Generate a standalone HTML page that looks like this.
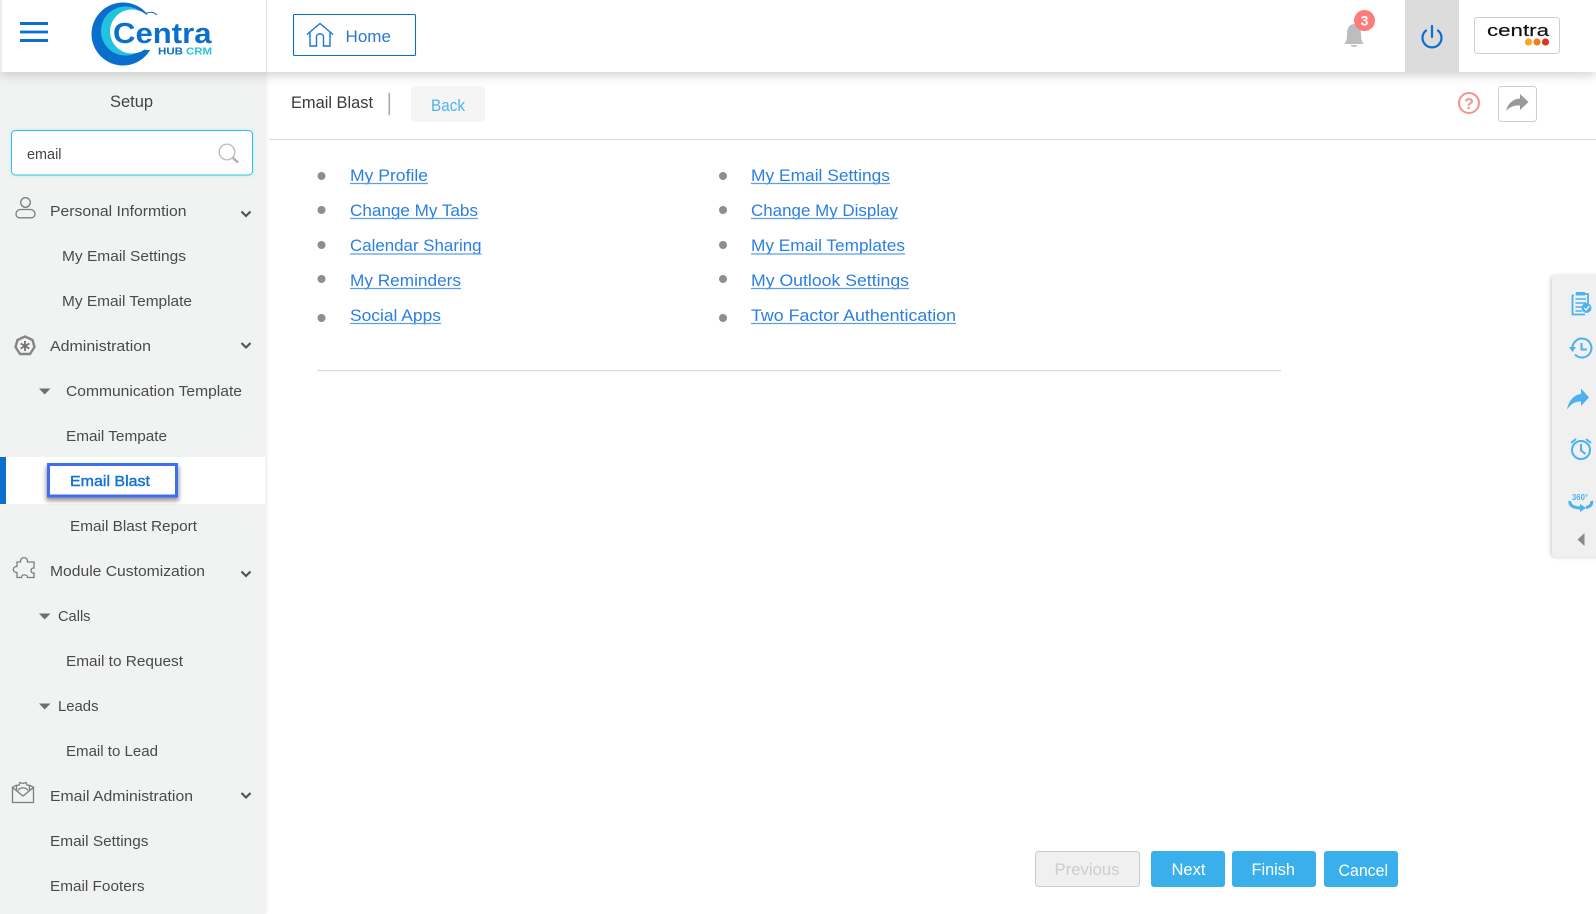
<!DOCTYPE html>
<html lang="en"><head><meta charset="utf-8"><title>Email Blast</title>
<style>
html,body{margin:0;padding:0;background:#fff;width:1596px;height:914px;overflow:hidden}
svg{display:block}
text{font-family:"Liberation Sans",sans-serif}
.s{font-size:15px;fill:#4a4a4a}
.l{font-size:17px;fill:#2b7fe0}
.ul{stroke:#5c9fe8;stroke-width:1.2}
.ic{fill:none;stroke:#7d7d7d;stroke-width:1.3}
.b{fill:none;stroke:#4db2ec;stroke-width:2}
</style></head><body>
<svg xmlns="http://www.w3.org/2000/svg" width="1596" height="914" viewBox="0 0 1596 914">
<defs>
<filter id="bl" x="-10%" y="-50%" width="120%" height="250%"><feGaussianBlur stdDeviation="6"/></filter>
<filter id="b2" x="-30%" y="-30%" width="160%" height="160%"><feGaussianBlur stdDeviation="2"/></filter>
<filter id="b3" x="-50%" y="-5%" width="200%" height="110%"><feGaussianBlur stdDeviation="2"/></filter>
</defs>
<rect width="1596" height="914" fill="#fff"/>
<!-- sidebar -->
<rect x="262" y="60" width="5" height="854" fill="#c8c8c8" opacity=".3" filter="url(#b2)"/>
<rect x="0" y="60" width="265" height="854" fill="#f1f3f3"/>
<!-- header -->
<rect x="0" y="62" width="1596" height="12" fill="#9a9a9a" opacity=".55" filter="url(#bl)"/>
<rect x="2" y="0" width="1594" height="72" fill="#fff"/>
<rect x="0" y="0" width="2" height="72" fill="#eceeee"/>
<rect x="266" y="0" width="1" height="72" fill="#e2e2e2"/>
<g fill="#0b6fce"><rect x="20" y="22" width="28" height="3"/><rect x="20" y="30.6" width="28" height="2.8"/><rect x="20" y="39" width="28" height="3"/></g>
<!-- logo -->
<circle cx="123" cy="34" r="31.5" fill="#0a6fcc"/>
<circle cx="125.500" cy="31" r="24.500" fill="#22c3e0"/>
<circle cx="132" cy="31.500" r="22" fill="#fff"/>
<path d="M136 26C140 18 146 13 152 14C155 12 158 13 160 16L230 17V46H157C154 50 148 51 143 49L128 44Z" fill="#fff"/>
<path d="M146 13.500C150 11.500 154 12 157 15" fill="none" stroke="#0a6fcc" stroke-width="1"/>
<text x="113" y="43" font-weight="700" fill="#0b6fce" textLength="98.500" lengthAdjust="spacingAndGlyphs" style="font-size:29px">Centra</text>
<text x="158" y="54.500" font-size="10.500" font-weight="700" fill="#0b6fce" textLength="25" lengthAdjust="spacingAndGlyphs">HUB</text>
<text x="186" y="54.500" font-size="10.500" font-weight="700" fill="#23c4df" textLength="26" lengthAdjust="spacingAndGlyphs">CRM</text>
<!-- Home -->
<rect x="293.500" y="14.500" width="122" height="41" rx="1" fill="#fff" stroke="#0b6fce" stroke-width="1.100"/>
<path d="M307 34.500L320 23.500L333 34.500M310 32.500V46H316.500V36.500C316.500 33 323.500 33 323.500 36.500V46H330V32.500" fill="none" stroke="#1a76d0" stroke-width="1.400"/>
<text x="345.500" y="42" font-size="17" fill="#2a78cf" textLength="45.500" lengthAdjust="spacingAndGlyphs">Home</text>
<!-- bell -->
<path d="M1354 24C1359 24 1361 29 1361 34C1361 40 1362 42 1364 44H1344C1346 42 1347 40 1347 34C1347 29 1349 24 1354 24Z" fill="#bdbdbd"/>
<path d="M1350.500 45H1357.500C1357 47.500 1351 47.500 1350.500 45Z" fill="#bdbdbd"/>
<circle cx="1364.500" cy="20.500" r="10.500" fill="#ff7b7b"/>
<text x="1364.500" y="25.500" font-size="14" font-weight="700" fill="#fff" text-anchor="middle">3</text>
<!-- power -->
<rect x="1405" y="0" width="54" height="72" fill="#dcdcdc"/>
<path d="M1426 30.500A9.500 9.500 0 1 0 1438 30.500M1432 26V37" fill="none" stroke="#0b6fce" stroke-width="2.200" stroke-linecap="round"/>
<!-- brand box -->
<rect x="1474.500" y="17.500" width="85" height="36" rx="3" fill="#fff" stroke="#d0d0d0"/>
<text x="1487" y="36" font-size="17" fill="#111" stroke="#111" stroke-width=".15" textLength="62" lengthAdjust="spacingAndGlyphs">centra</text>
<circle cx="1528.500" cy="42" r="3.600" fill="#f7a81b"/><circle cx="1537" cy="42" r="3.600" fill="#f47b20"/><circle cx="1545.500" cy="42" r="3.600" fill="#d9381e"/>
<!-- title bar -->
<text x="291" y="108" font-size="16.500" fill="#3a3a3a" textLength="82" lengthAdjust="spacingAndGlyphs">Email Blast</text>
<rect x="388.500" y="93" width="1.600" height="22" fill="#aaa"/>
<rect x="411" y="86" width="74" height="36" rx="3" fill="#f5f5f5"/>
<text x="431" y="111" font-size="17" fill="#4db2ec" textLength="34" lengthAdjust="spacingAndGlyphs">Back</text>
<rect x="269" y="139" width="1327" height="1" fill="#dadada"/>
<circle cx="1469" cy="103" r="10" fill="none" stroke="#f49191" stroke-width="2"/>
<text x="1469" y="109" font-size="16" font-weight="700" fill="#f49191" text-anchor="middle">?</text>
<rect x="1498.500" y="86.500" width="38" height="35" rx="3" fill="#fff" stroke="#cfcfcf"/>
<path d="M1506 111C1508 103 1513 99 1520 98.500V94L1528.500 102L1520 110V105.500C1514 105 1510 107 1506 111Z" fill="#999"/>
<!-- search -->
<rect x="11.500" y="130.500" width="241" height="44.500" rx="4" fill="#2ac4e0" opacity=".35" filter="url(#b2)"/>
<rect x="11.500" y="130.500" width="241" height="44.500" rx="4" fill="#fff" stroke="#2ac4e0"/>
<text x="110" y="107" font-size="17" fill="#444" textLength="43" lengthAdjust="spacingAndGlyphs">Setup</text>
<text x="27" y="159" font-size="15" fill="#444" textLength="34.500" lengthAdjust="spacingAndGlyphs">email</text>
<circle cx="227" cy="152" r="7.800" fill="none" stroke="#bdbdbd" stroke-width="1.400"/>
<path d="M233 158L238 162.500" stroke="#b0b0b0" stroke-width="2.500"/>
<!-- active row -->
<rect x="0" y="457" width="265" height="47" fill="#fff"/>
<rect x="0" y="457" width="6" height="47" fill="#0b6fce"/>
<rect x="46" y="466" width="133" height="35" fill="#555" opacity=".6" filter="url(#b2)"/>
<rect x="48.500" y="464.500" width="128" height="31.500" fill="#fff" stroke="#3f6ff0" stroke-width="3"/>
<text x="70" y="486" font-size="15" fill="#1272d0" stroke="#1272d0" stroke-width=".4" textLength="80" lengthAdjust="spacingAndGlyphs">Email Blast</text>
<!-- sidebar text -->
<text class="s" x="50" y="216" textLength="136.500" lengthAdjust="spacingAndGlyphs">Personal Informtion</text>
<text class="s" x="62" y="261" textLength="124" lengthAdjust="spacingAndGlyphs">My Email Settings</text>
<text class="s" x="62" y="306" textLength="130" lengthAdjust="spacingAndGlyphs">My Email Template</text>
<text class="s" x="50" y="351" textLength="101" lengthAdjust="spacingAndGlyphs">Administration</text>
<text class="s" x="66" y="396" textLength="176" lengthAdjust="spacingAndGlyphs">Communication Template</text>
<text class="s" x="66" y="441" textLength="101" lengthAdjust="spacingAndGlyphs">Email Tempate</text>
<text class="s" x="70" y="531" textLength="127" lengthAdjust="spacingAndGlyphs">Email Blast Report</text>
<text class="s" x="50" y="576" textLength="155" lengthAdjust="spacingAndGlyphs">Module Customization</text>
<text class="s" x="58" y="621" textLength="32.500" lengthAdjust="spacingAndGlyphs">Calls</text>
<text class="s" x="66" y="666" textLength="117" lengthAdjust="spacingAndGlyphs">Email to Request</text>
<text class="s" x="58" y="711" textLength="40.500" lengthAdjust="spacingAndGlyphs">Leads</text>
<text class="s" x="66" y="756" textLength="92" lengthAdjust="spacingAndGlyphs">Email to Lead</text>
<text class="s" x="50" y="801" textLength="143" lengthAdjust="spacingAndGlyphs">Email Administration</text>
<text class="s" x="50" y="846" textLength="98.500" lengthAdjust="spacingAndGlyphs">Email Settings</text>
<text class="s" x="50" y="891" textLength="94.500" lengthAdjust="spacingAndGlyphs">Email Footers</text>
<!-- chevrons -->
<g fill="none" stroke="#555" stroke-width="2.200">
<path d="M241.500 211.500L246 216L250.500 211.500"/><path d="M241.500 343L246 347.500L250.500 343"/><path d="M241.500 571.500L246 576L250.500 571.500"/><path d="M241.500 793L246 797.500L250.500 793"/>
</g>
<!-- triangles -->
<g fill="#6f6f6f"><path d="M39 388.500H50.500L44.700 394.500Z"/><path d="M39 613.500H50.500L44.700 619.500Z"/><path d="M39 703.500H50.500L44.700 709.500Z"/></g>
<!-- sidebar icons -->
<g class="ic">
<circle cx="25.500" cy="202.500" r="4.800"/><path d="M20.500 209.500H30.500C33 209.500 35 211.500 35 214C35 216.500 33 217.800 30.500 217.800H20.500C18 217.800 16 216.500 16 214C16 211.500 18 209.500 20.500 209.500Z"/>
</g>
<path d="M25 336.500L32.500 340L34.500 347L30 354L20 354L15.500 347L17.500 340Z" fill="none" stroke="#858585" stroke-width="2.400" stroke-linejoin="round"/>
<path d="M25 341V351M20.700 343.500L29.300 348.500M20.700 348.500L29.300 343.500" stroke="#707070" stroke-width="1.800"/>
<path class="ic" d="M20.500 562C20 556 28 556 27.500 562H34V568C30 567.500 30 573.500 34 573V577.500H27.500C28 574 21 574 21.500 577.500H17V572.500C12 572.500 12 566.500 17 566.500V562Z"/>
<g class="ic"><path d="M12.500 787.500V802.500H33.500V787.500L23 796Z"/><path d="M12.500 787.500L16.500 785M33.500 787.500L29.500 785"/><path d="M16.500 790V785.500L19 785L20 782.500L23 783.500L26 782.500L27 785L29.500 785.500V790"/><path d="M18 790.500C20 787 26 787 28 790.500"/></g>
<!-- links -->
<g fill="#8e8e8e"><circle cx="321.500" cy="176" r="4"/><circle cx="321.500" cy="210" r="4"/><circle cx="321.500" cy="245" r="4"/><circle cx="321.500" cy="279" r="4"/><circle cx="321.500" cy="318" r="4"/>
<circle cx="723" cy="176" r="4"/><circle cx="723" cy="210" r="4"/><circle cx="723" cy="245" r="4"/><circle cx="723" cy="279" r="4"/><circle cx="723" cy="318" r="4"/></g>
<text class="l" x="350" y="181" textLength="78" lengthAdjust="spacingAndGlyphs">My Profile</text><path class="ul" d="M350 183.500H428"/>
<text class="l" x="350" y="216" textLength="128" lengthAdjust="spacingAndGlyphs">Change My Tabs</text><path class="ul" d="M350 218.500H478"/>
<text class="l" x="350" y="251" textLength="131.500" lengthAdjust="spacingAndGlyphs">Calendar Sharing</text><path class="ul" d="M350 254H481.500"/>
<text class="l" x="350" y="286" textLength="111" lengthAdjust="spacingAndGlyphs">My Reminders</text><path class="ul" d="M350 288.500H461"/>
<text class="l" x="350" y="321" textLength="91" lengthAdjust="spacingAndGlyphs">Social Apps</text><path class="ul" d="M350 323.500H441"/>
<text class="l" x="751" y="181" textLength="139" lengthAdjust="spacingAndGlyphs">My Email Settings</text><path class="ul" d="M751 183.500H890"/>
<text class="l" x="751" y="216" textLength="147" lengthAdjust="spacingAndGlyphs">Change My Display</text><path class="ul" d="M751 218.500H898"/>
<text class="l" x="751" y="251" textLength="154" lengthAdjust="spacingAndGlyphs">My Email Templates</text><path class="ul" d="M751 254H905"/>
<text class="l" x="751" y="286" textLength="158" lengthAdjust="spacingAndGlyphs">My Outlook Settings</text><path class="ul" d="M751 288.500H909"/>
<text class="l" x="751" y="321" textLength="205" lengthAdjust="spacingAndGlyphs">Two Factor Authentication</text><path class="ul" d="M751 323.500H956"/>
<rect x="317" y="370" width="964" height="1.200" fill="#d8d8d8"/>
<!-- buttons -->
<rect x="1035.500" y="851.500" width="104" height="35" rx="3" fill="#f1f0f0" stroke="#cccccc"/>
<text x="1054.500" y="875" font-size="17" fill="#cdcdcd" textLength="65" lengthAdjust="spacingAndGlyphs">Previous</text>
<rect x="1151" y="851" width="74" height="36" rx="3" fill="#39b0ec"/>
<text x="1171.500" y="875" font-size="17" fill="#fff" textLength="34" lengthAdjust="spacingAndGlyphs">Next</text>
<rect x="1232" y="851" width="84" height="36" rx="3" fill="#39b0ec"/>
<text x="1251.500" y="875" font-size="17" fill="#fff" textLength="43.500" lengthAdjust="spacingAndGlyphs">Finish</text>
<rect x="1324" y="851" width="74" height="36" rx="3" fill="#39b0ec"/>
<text x="1338.500" y="876" font-size="17" fill="#fff" textLength="49.500" lengthAdjust="spacingAndGlyphs">Cancel</text>
<!-- right panel -->
<rect x="1551" y="276" width="60" height="281" rx="4" fill="#777" opacity=".4" filter="url(#b3)"/>
<rect x="1552" y="275" width="50" height="282" rx="4" fill="#f0f0f0"/>
<g class="b">
<path d="M1574 295.500H1572.500V314.500H1585" stroke-width="1.800"/><path d="M1575.500 294H1588V305" stroke-width="1.800"/><path d="M1575.500 299H1586M1575.500 303H1586M1575.500 307H1582M1575.500 311H1582" stroke-width="1.600"/>
</g>
<rect x="1576" y="292" width="9" height="3.500" fill="#4db2ec"/>
<circle cx="1586.500" cy="308" r="5" fill="#4db2ec"/><path d="M1584 308L1586 310L1589.300 306.200" fill="none" stroke="#fff" stroke-width="1.200"/>
<path class="b" d="M1572.500 349A9.500 9.500 0 1 1 1575 354.500M1581.500 343V349.500H1587" stroke-width="2.200"/>
<path d="M1569 347H1576L1572.500 352Z" fill="#4db2ec"/>
<path d="M1567 409.500C1569 399.500 1575 394.500 1581 394V388.500L1589 397.500L1581 406V401.500C1576 401 1571 403.500 1567 409.500Z" fill="#4db2ec"/>
<circle class="b" cx="1581" cy="450" r="9" stroke-width="2.500"/>
<path class="b" d="M1581 444V450.500L1585.500 454M1571 443L1576 439M1591 443L1586 439" stroke-width="2.400"/>
<text x="1580" y="500" font-size="8.500" font-weight="700" fill="#4db2ec" text-anchor="middle" textLength="16" lengthAdjust="spacingAndGlyphs">360°</text>
<path d="M1570 501C1569 506 1575 508 1581 508" fill="none" stroke="#4db2ec" stroke-width="3"/>
<path d="M1580 504L1586 508L1580 512Z" fill="#4db2ec"/>
<path d="M1591.500 501C1592.500 504 1590 507 1586 507.500" fill="none" stroke="#4db2ec" stroke-width="3"/>
<path d="M1584.500 533V546L1577.500 539.500Z" fill="#8a8a8a"/>
</svg>
</body></html>
